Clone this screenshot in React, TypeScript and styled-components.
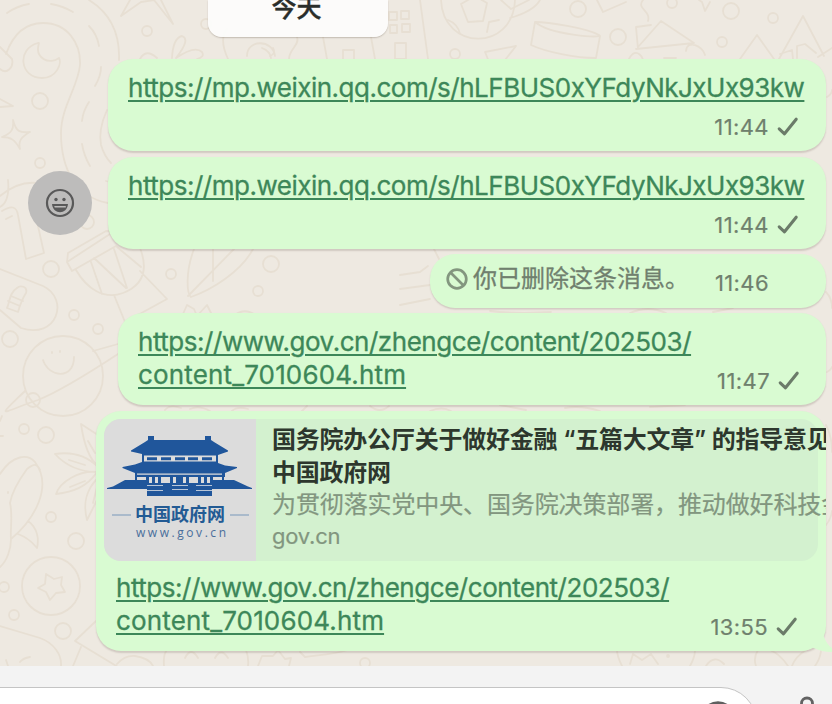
import React from "react";
import styled, { createGlobalStyle } from "styled-components";

const GlobalStyle = createGlobalStyle`
  * { box-sizing: border-box; }
  html, body { margin: 0; padding: 0; overflow: hidden; }
  body { font-family: Inter, "Noto Sans CJK SC", sans-serif; background: #f3f3f3; }
`;

const Screen = styled.main`
  display: flex;
  flex-direction: column;
  width: 832px;
  height: 704px;
  overflow: hidden;
`;

const Conversation = styled.section`
  position: relative;
  display: flex;
  flex-direction: column;
  height: 666px;
  flex: none;
  overflow: hidden;
  background: #eee9e1;
`;

const Wallpaper = styled.svg`
  position: absolute;
  inset: 0;
  fill: none;
  stroke: #e7dfd3;
  stroke-width: 1.8;
  stroke-linecap: round;
  stroke-linejoin: round;
`;

const DayChip = styled.div`
  position: relative;
  display: flex;
  justify-content: center;
  align-items: flex-end;
  width: 180px;
  height: 37px;
  flex: none;
  margin: 0 0 22px 208px;
  padding-bottom: 12px;
  padding-right: 3px;
  border-radius: 0 0 14px 14px;
  background: rgba(252, 252, 251, 0.95);
  box-shadow: 0 1px 1.5px rgba(60, 40, 30, 0.24);
  color: #2a2d2a;
  font-size: 25px;
  line-height: 34px;
  font-weight: 500;
  -webkit-text-stroke: 0.4px #2a2d2a;
`;

const Row = styled.div<{ $gap: number }>`
  position: relative;
  display: flex;
  justify-content: flex-end;
  align-items: center;
  flex: none;
  padding-right: 6px;
  margin-bottom: ${(p) => p.$gap}px;
`;

const Bubble = styled.article<{ $width: number; $height: number; $padX: number }>`
  position: relative;
  width: ${(p) => p.$width}px;
  height: ${(p) => p.$height}px;
  padding: 12px 0 0 ${(p) => p.$padX}px;
  border-radius: 25px;
  background: #d9fbd2;
  box-shadow: 0 1.5px 1.5px rgba(70, 50, 40, 0.17);
`;

const Link = styled.a<{ $spacing: number }>`
  display: block;
  width: max-content;
  color: #3d8759;
  font-size: 26px;
  line-height: 33px;
  letter-spacing: ${(p) => p.$spacing}px;
  white-space: pre;
  text-decoration: underline;
  text-decoration-thickness: 2px;
  text-underline-offset: 3px;
  -webkit-text-stroke: 0.3px #3d8759;
`;

const Meta = styled.div<{ $right: number; $bottom: number }>`
  position: absolute;
  right: ${(p) => p.$right}px;
  bottom: ${(p) => p.$bottom}px;
  display: flex;
  align-items: center;
  gap: 8px;
  height: 28px;
  color: #6f806d;
  font-size: 22px;
  line-height: 28px;
  letter-spacing: 0.4px;
  -webkit-text-stroke: 0.2px #6f806d;
`;

const Tick = styled.svg`
  width: 22px;
  height: 22px;
  fill: none;
  stroke: #6b7b69;
  stroke-width: 3.1;
  stroke-linecap: round;
  stroke-linejoin: round;
`;

const ReactButton = styled.button`
  display: grid;
  place-items: center;
  width: 64px;
  height: 64px;
  margin-right: 16px;
  padding: 0;
  border: 0;
  border-radius: 50%;
  background: #bdbcbb;
`;

const Deleted = styled.p`
  display: flex;
  align-items: center;
  gap: 5px;
  margin: -4px 0 0;
  color: #70806e;
  font-size: 24px;
  line-height: 34px;
  white-space: nowrap;
  -webkit-text-stroke: 0.3px #70806e;
`;

const LargeBubble = styled(Bubble)`
  display: flex;
  flex-direction: column;
  padding: 8px 0 0;
`;

const Preview = styled.div`
  display: flex;
  flex: none;
  width: 714px;
  height: 142px;
  margin: 0 0 10px 8px;
  border-radius: 17px;
  background: #d3f1cf;
`;

const Thumbnail = styled.div`
  width: 152px;
  height: 142px;
  flex: none;
  border-radius: 17px 0 0 17px;
  background: #dcdcdc;
  overflow: hidden;
`;

const PreviewText = styled.div`
  width: 570px;
  flex: none;
  padding: 5px 0 0 16px;
  overflow: hidden;
  white-space: nowrap;
  font-size: 24px;
  line-height: 32.5px;
`;

const Title = styled.div`
  color: #2d372d;
  font-weight: 600;
  letter-spacing: -0.22px;
`;

const Summary = styled.div`
  color: #82967f;
  letter-spacing: -0.12px;
  -webkit-text-stroke: 0.2px #82967f;
`;

const Domain = styled.div`
  color: #82967f;
  font-size: 22px;
  line-height: 29px;
  letter-spacing: -0.2px;
  -webkit-text-stroke: 0.2px #82967f;
`;

const LinkBody = styled.div`
  padding-left: 20px;
`;

const NextTail = styled.svg`
  position: absolute;
  left: 713px;
  bottom: -1px;
  overflow: visible;
`;

const Composer = styled.footer`
  position: relative;
  display: flex;
  height: 38px;
  background: #f3f3f3;
  padding-top: 21px;
  overflow: hidden;
`;

const Input = styled.div`
  display: flex;
  justify-content: flex-end;
  flex: none;
  width: 797px;
  height: 72px;
  margin-left: -40px;
  padding: 11px 19px 0 0;
  border: 1px solid #c4c4c4;
  border-radius: 36px;
  background: white;
`;

const Mic = styled.svg`
  flex: none;
  margin: 8px 0 0 37px;
`;

function Doodles() {
  return (
    <Wallpaper width="832" height="666" viewBox="0 0 832 666">
      {/* winding road and moon */}
      <path d="M6 54C14 32 27 23 43 23c25 0 38 21 37 42-2 22-19 42-19 68 0 35 14 64 47 70M89 0c21 13 31 34 30 60" />
      <path d="M7 13q10-7 22-9M51 4q12 2 22 8M89 26q8 8 10 20M101 67q0 9-6 19M89 102q-6 9-7 19M82 144q2 12 8 22M107 110q-9 20-6 35c3 10 7 15 10 18" />
      <path d="M38 43C16 49 20 78 42 78c15 0 20-15 17-20-9 7-25 1-20-15zM0 69c7 6 14-2 12-10L0 47" />
      <path d="M13 120c3 12 7 13 17 12-9 5-12 9-10 17-5-9-9-12-18-12 10-4 12-8 11-17zM0 99l13 7-13 1" />
      <path d="M121 16l9-16M121 16l20-14 13-2 19 24-12-24M140 59q6-11 17-1M172 58q1-20 10-22 9 3-6 22 19-13 26-6 3 5-5 7M228 59c-5-11-8-22-1-30M247 56c0-17 26-17 28 0m-13-8q8 3 9 10" />
      <circle cx="147" cy="31" r="5" /><circle cx="40" cy="101" r="8" /><circle cx="40" cy="163" r="5" /><circle cx="206" cy="24" r="5" />
      {/* buildings and ball beside the date */}
      <path d="M270 56q6-2 3-8M297 37c3 8-8 12-8 22M323 37l4 22M343 59v-9h11v9M371 37l4 22M389 12h8v8h-8zM401 11h8v8h-8zM390 25h7v8h-7zM402 24h8v8h-8zM395 43h11v16h-11zM420 0l8 59" />
      <path d="M441 0c2 51 72 52 74 0M461 4l14-8 12 7-4 18-15 1zM448 20q10 4 12 14M487 32l2-10 10-2M501 0l10 9 18-9M510 18q24-7 30-18" />
      <circle cx="455" cy="54" r="5" />
      <path d="M485 52l31-6-22 28zM535 22c13 0 52 6 64 13 6 4-49 0-64-13l-4 23c15 7 45 13 65 13l4-22M597 0l6 12 23-10M643 0c-7 9 8 10 5 21" />
      <path d="M636 27l15-2M636 27l2 22M636 49l58-6-33-22-23 26m-9 12c7-14 16 0 14 4m43-12c1-12 17-5 19 4M664 58h12M699 0l3 2 3 9 5-9M740 59l17-24 17 24M779 59l24-43 21 40M793 59l-1-9-12 4M797 58v-12l8-2 11 9M818 57l14-9" />
      <circle cx="578" cy="9" r="8" /><circle cx="618" cy="37" r="8" /><circle cx="672" cy="3" r="5" /><circle cx="731" cy="11" r="8" /><circle cx="773" cy="18" r="5" /><circle cx="722" cy="42" r="5" />
      {/* tree, mug and skateboard */}
      <path d="M0 196q18-15 37-13M0 207q10-5 8-27M2 211q14-9 16 4l8 44 18-6-8-36 8-4M12 216l-6 3M106 181l10 3M114 171q-5 8 3 15" />
      <circle cx="87" cy="222" r="7" />
      <path d="M68 253l38-22 8 1M68 253l-1 9 43-28M67 262l5 9 44-25M76 270c11 19 28 30 47 23 23-9 24-27 17-45M91 262l11 32m-8-36 32 30M114 249l13 39m-10-41 24 20M114 295l11 27 42-23-27-28" />
      <circle cx="51" cy="269" r="8" /><circle cx="74" cy="315" r="5" /><circle cx="98" cy="329" r="5" /><circle cx="10" cy="339" r="8" />
      <path d="M0 269l43 17c27 13 14 54-22 42L0 310M17 288c-8 5-7 14-10 20l11 4q3-11 8-19c2-7-6-8-9-5m-6 8 12 5m-15 0 12 5" />
      {/* smiling planet */}
      <circle cx="63" cy="376" r="40" /><circle cx="33" cy="400" r="7" />
      <path d="M43 360c6 18 31 20 31-3M52 352v1m8-2v1M93 351l25-7M25 391C-5 420 0 413 38 400c20-8 51-27 80-46" />
      <path d="M194 249c-9 24-7 45-3 48 20-7 50-25 62-48M213 249v32M188 296l46-47M183 314l4-9 7 4 3 7 10-11 4 8M235 315q10-8 22 1" />
      <circle cx="271" cy="264" r="8" /><circle cx="171" cy="274" r="5" /><circle cx="258" cy="291" r="5" />
      <path d="M400 275l20-3 8-6M400 305l30-6M434 249l5 10M400 289l30-4" />
      {/* leaves, whale and star badge */}
      <path d="M0 421l2-5m-2 20h3M0 474c13-20 28-20 35-12 18 24 0 57-24 77M10 503c2-12 9-23 17-34 8-6 10-5 13 1M28 521c10 7 11 19 9 27-3-3-6-9-19-14M10 503c3 12 0 28 1 36 0 10-4 22-11 28M8 492v1" />
      <path d="M104 439L81 424c2 14 7 34 17 42M55 454c12 13 27 19 47 18M55 454c20-3 34 4 43 13M56 494c4-12 23-24 41-22M56 494c17-2 31-7 41-22M87 520c-4-16-2-30 12-43M87 520l13-26M69 460l16 5m-15 22 15-6M88 441l7 12M93 503l4-16" />
      <circle cx="24" cy="429" r="5" /><circle cx="46" cy="435" r="8" /><circle cx="51" cy="517" r="5" /><circle cx="76" cy="541" r="8" />
      <circle cx="51" cy="586" r="29" /><path d="M46 574l8 5 8-2-1 8 4 7-9 1-6 7-4-8-8-4 7-4z" />
      <circle cx="4" cy="587" r="5" /><circle cx="14" cy="615" r="5" /><circle cx="63" cy="631" r="8" />
      <path d="M0 626l40 12c14 5 22 17 21 28M6 660l2 6m12-4q3-4 10-5M96 621l-21 20 43 26M81 647l-8 19M117 664q8-9 18-8 14 2 18 10" />
      <path d="M164 666q-1-12 3-16M185 658q6-12 13 0m17 0q6-11 13 0M246 650q3 8 2 16M258 666l4-10 11 0 5-6M300 652l5 5c15-2 30-3 43-7M278 650l7 9 6-1-2 8" />
      <circle cx="365" cy="663" r="5" />
      {/* fragments between the lower bubbles */}
      <path d="M165 410q5-6 16-2M190 409q9-4 20 2M232 411q5-5 16-2M307 406l-5 5M370 406q10 8 19 0M430 411q12-5 21 0M500 405l26 5M565 408q16-3 35 3M650 407l35-2" />
      <path d="M490 311q26 3 61 1M630 313q18-8 36 0M713 312l20-4M826 292q6 6 6 16M827 372q4-2 5-5M826 425q6 11 6 27M826 525q5-6 6-14M827 97q5-3 5-7" />
      <path d="M617 650q0 6 5 16m73-16q0 7-5 16M630 664l3-10 9 6 9-6 7 10M706 666q8-12 18-2M758 650q-5 8-2 16m14-16q10 4 18 16M806 650q-11 7-14 16M821 651q-1 8-6 15" />
      <circle cx="668" cy="656" r="1" />
    </Wallpaper>
  );
}

function Check() {
  return <Tick viewBox="0 0 22 22"><path d="M2.2 12.8l5.3 5L19.2 3.2" /></Tick>;
}

function Stamp({ time, right = 27, bottom = 10 }: { time: string; right?: number; bottom?: number }) {
  return <Meta $right={right} $bottom={bottom}><time>{time}</time><Check /></Meta>;
}

function GateLogo() {
  return (
    <svg width="152" height="142" viewBox="0 0 152 142">
      <g fill="#20569b">
        {/* roofs */}
        <path d="M44 17h6v4h51v-4h6v4l3 2 14 8.5v1L114 36v8l7 2.500 12 1.500v1l-12 5v4H31v-4l-12.500-5v-1l12.500-2.500 7-2.500v-8L27 32.500v-1l14-8.500 3-2z" />
        {/* terrace wings and the stairs */}
        <path d="M21 61h22v9H3v-1l6-1.500zM108 61h22l14 6.500 4 1.500v1h-40zM43 64h65v13H43z" />
        <path d="M31 58h2v4h-2zM42 58h3v8h-3zM48 58h3v7h-3zM54 58h3v7h-3zM66 58h3v7h-3zM72 58h7v7h-7zM82 58h3v7h-3zM94 58h3v7h-3zM100 58h3v7h-3zM106 58h3v8h-3zM118 58h2v4h-2z" />
      </g>
      <path d="M40 36.500h72v6H40zM33 54.500h85v1.300H33z" fill="#dcdcdc" />
      <path d="M43 38.200h10v3H43zM57 38.200h10v3H57zM71 38.200h10v3H71zM84 38.200h10v3H84zM98 38.200h10v3H98z" fill="#20569b" />
      <path d="M43 66.500h16m33 0h16M43 71.500h16m33 0h16M68 66.500h16M68 70.500h16" stroke="#b8c6d8" strokeWidth="1.2" />
      <path d="M8 96h19m99 0h19" stroke="#7897b9" strokeWidth="1.2" />
      <text x="31" y="101.500" textLength="90" fill="#235b94" fontSize="18" fontWeight="700" fontFamily="Noto Sans CJK SC">中国政府网</text>
      <text x="32" y="118" textLength="90" fill="#496e9b" fontSize="12" fontFamily="Open Sans">www.gov.cn</text>
    </svg>
  );
}

function GovLinks() {
  return (
    <>
      <Link $spacing={-0.46}>https://www.gov.cn/zhengce/content/202503/</Link>
      <Link $spacing={0.15}>content_7010604.htm</Link>
    </>
  );
}

export default function App() {
  return (
    <>
      <GlobalStyle />
      <Screen>
        <Conversation>
          <Doodles />
          <DayChip>今天</DayChip>
          <Row $gap={6}>
            <Bubble $width={718} $height={92} $padX={20}>
              <Link $spacing={-0.49}>https://mp.weixin.qq.com/s/hLFBUS0xYFdyNkJxUx93kw</Link>
              <Stamp time="11:44" />
            </Bubble>
          </Row>
          <Row $gap={5}>
            <ReactButton aria-label="React">
              <svg width="30" height="30" viewBox="0 0 30 30">
                <circle cx="15" cy="15" r="13" fill="none" stroke="#595959" strokeWidth="2.2" />
                <circle cx="11" cy="11.5" r="1.7" fill="#595959" /><circle cx="19" cy="11.5" r="1.7" fill="#595959" />
                <path d="M7 16h16c-1 11-15 11-16 0z" fill="#595959" />
                <path d="M9.2 18h11.6v1.6H9.7z" fill="#bdbcbb" />
              </svg>
            </ReactButton>
            <Bubble $width={718} $height={92} $padX={20}>
              <Link $spacing={-0.49}>https://mp.weixin.qq.com/s/hLFBUS0xYFdyNkJxUx93kw</Link>
              <Stamp time="11:44" />
            </Bubble>
          </Row>
          <Row $gap={5}>
            <Bubble $width={396} $height={54} $padX={16}>
              <Deleted>
                <svg width="22" height="22" viewBox="0 0 22 22" fill="none" stroke="#83967f" strokeWidth="2.7"><circle cx="11" cy="11" r="9.3" /><path d="M4.5 4.5l13 13" /></svg>
                你已删除这条消息。
              </Deleted>
              <Meta $right={57} $bottom={11}><time>11:46</time></Meta>
            </Bubble>
          </Row>
          <Row $gap={6}>
            <Bubble $width={708} $height={92} $padX={20}>
              <GovLinks />
              <Stamp time="11:47" right={26} />
            </Bubble>
          </Row>
          <Row $gap={0}>
            <LargeBubble $width={730} $height={240} $padX={0}>
              <Preview>
                <Thumbnail><GateLogo /></Thumbnail>
                <PreviewText>
                  <Title>国务院办公厅关于做好金融 “五篇大文章” 的指导意见</Title>
                  <Title>中国政府网</Title>
                  <Summary>为贯彻落实党中央、国务院决策部署，推动做好科技金融</Summary>
                  <Domain>gov.cn</Domain>
                </PreviewText>
              </Preview>
              <LinkBody><GovLinks /></LinkBody>
              <Stamp time="13:55" right={28} />
              <NextTail width="24" height="30" viewBox="0 0 24 30">
                <path d="M13 2C13 12 16 21 23 26V30Q13 30 3.5 25.5Q-2 29-9 29V2Z" fill="#d9fbd2" />
              </NextTail>
            </LargeBubble>
          </Row>
        </Conversation>
        <Composer>
          <Input>
            <svg width="38" height="38" viewBox="0 0 38 38"><circle cx="19" cy="20" r="16" fill="none" stroke="#5f5f5f" strokeWidth="3.4" /></svg>
          </Input>
          <Mic width="26" height="36" viewBox="0 0 26 36"><rect x="7.5" y="3" width="11" height="22" rx="5.5" fill="none" stroke="#626262" strokeWidth="2.8" /></Mic>
        </Composer>
      </Screen>
    </>
  );
}
